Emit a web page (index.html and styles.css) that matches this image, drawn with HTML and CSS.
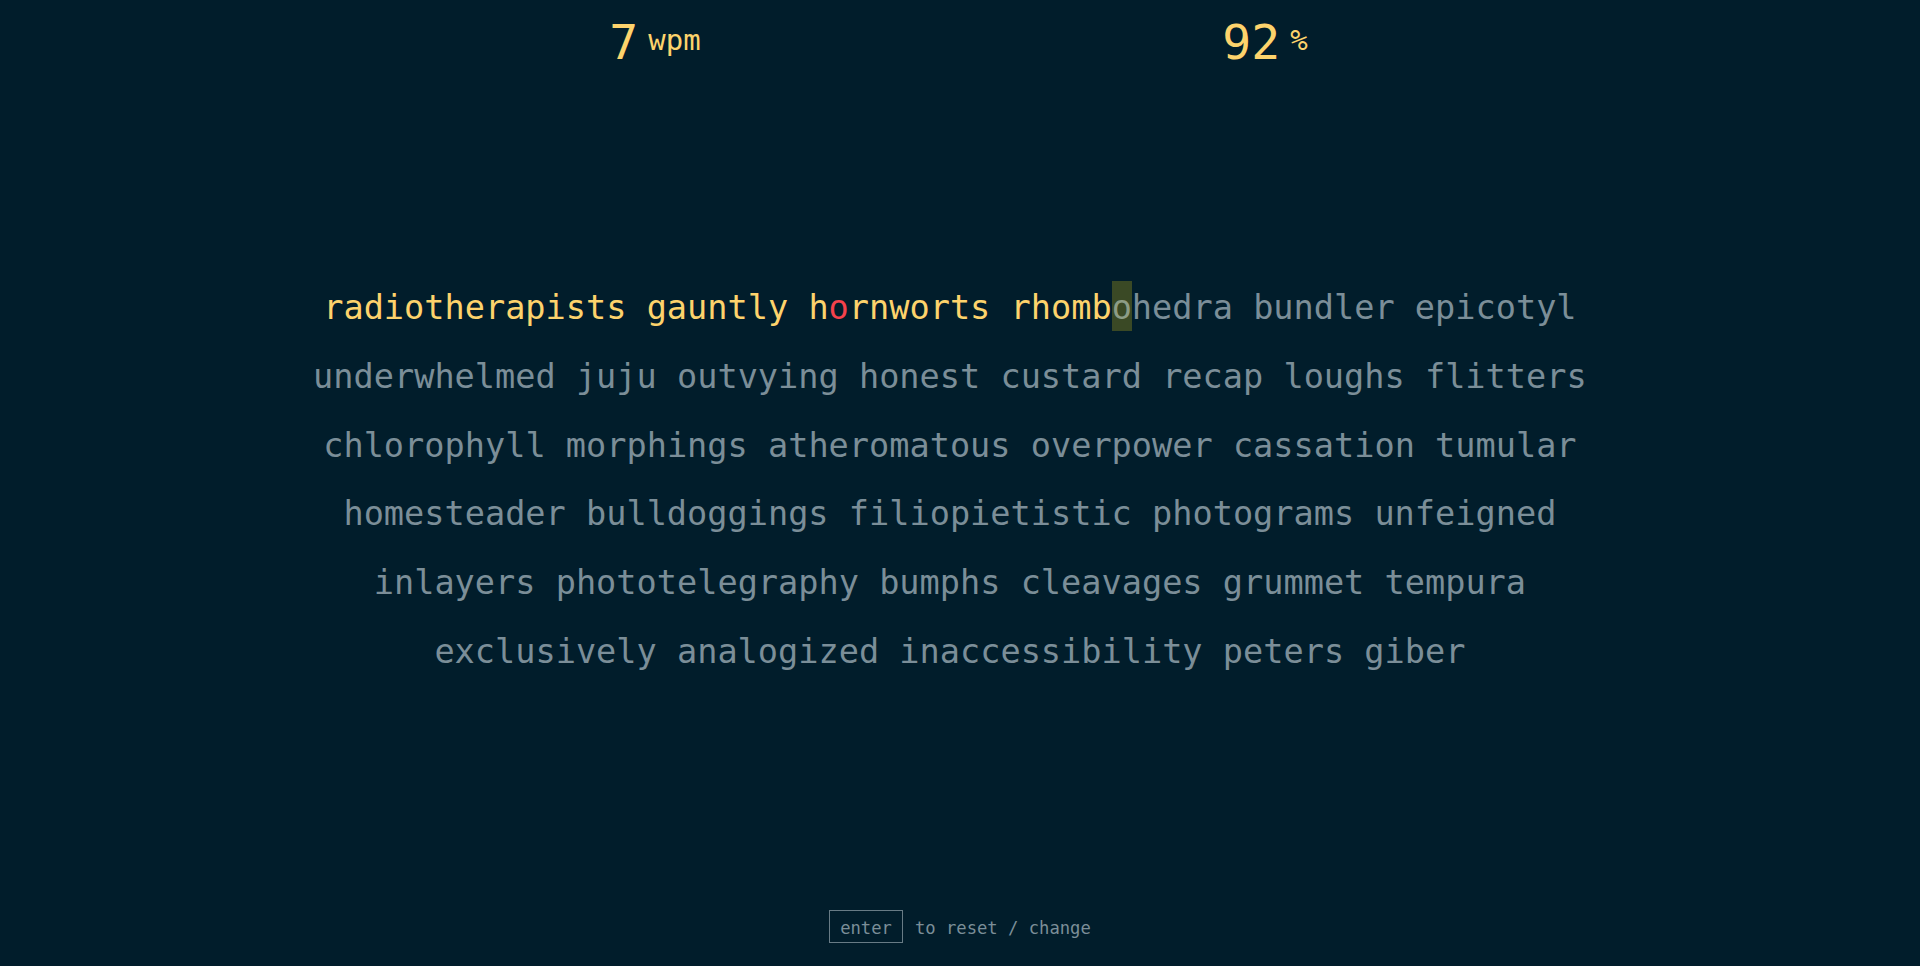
FILE: index.html
```html
<!DOCTYPE html>
<html lang="en">
<head>
<meta charset="utf-8">
<title>typing test</title>
<link rel="stylesheet" href="styles.css">
</head>
<body>
<div class="app">
  <header class="stats">
    <div class="stat"><span class="stat-value">7</span><span class="stat-unit">wpm</span></div>
    <div class="stat"><span class="stat-value">92</span><span class="stat-unit">%</span></div>
  </header>
  <main class="words">
    <span class="word typed">radiotherapists</span><span class="word typed">gauntly</span><span class="word typed">h<span class="wrong">o</span>rnworts</span><span class="word typed">rhomb<span class="cursor">o</span><span class="pending">hedra</span></span><span class="word">bundler</span><span class="word">epicotyl</span><span class="word">underwhelmed</span><span class="word">juju</span><span class="word">outvying</span><span class="word">honest</span><span class="word">custard</span><span class="word">recap</span><span class="word">loughs</span><span class="word">flitters</span><span class="word">chlorophyll</span><span class="word">morphings</span><span class="word">atheromatous</span><span class="word">overpower</span><span class="word">cassation</span><span class="word">tumular</span><span class="word">homesteader</span><span class="word">bulldoggings</span><span class="word">filiopietistic</span><span class="word">photograms</span><span class="word">unfeigned</span><span class="word">inlayers</span><span class="word">phototelegraphy</span><span class="word">bumphs</span><span class="word">cleavages</span><span class="word">grummet</span><span class="word">tempura</span><span class="word">exclusively</span><span class="word">analogized</span><span class="word">inaccessibility</span><span class="word">peters</span><span class="word">giber</span>
  </main>
  <footer class="hint">
    <span class="key">enter</span><span class="hint-text">to reset / change</span>
  </footer>
</div>
</body>
</html>
```

FILE: styles.css
```css
html, body {
  margin: 0;
  padding: 0;
  background: #011d2b;
}

body {
  font-family: "DejaVu Sans Mono", "Liberation Mono", monospace;
  color: #7b8e98;
}

.app {
  height: 966px;
  display: flex;
  flex-direction: column;
}

.stats {
  width: 1220px;
  margin: 0 auto;
  padding-top: 14px;
  display: grid;
  grid-template-columns: 1fr 1fr;
  color: #fdd36c;
}

.stat {
  display: flex;
  justify-content: center;
  align-items: center;
  gap: 10px;
  height: 56px;
}

.stat-value {
  font-size: 48px;
  line-height: 56px;
}

.stat-unit {
  font-size: 29px;
  margin-bottom: 4px;
}

.words {
  width: 1300px;
  margin: 204px auto 0;
  display: flex;
  flex-wrap: wrap;
  justify-content: center;
  font-size: 33.6px;
  line-height: 68.8px;
}

.word {
  margin-right: 1ch;
  white-space: nowrap;
}

.typed {
  color: #fdd36c;
}

.wrong {
  color: #f5424c;
}

.cursor {
  background: #3a4925;
  color: #8c9c86;
  padding: 7px 0 4px;
}

.pending {
  color: #7b8e98;
}

.hint {
  margin-top: auto;
  padding-bottom: 23px;
  display: flex;
  justify-content: center;
  align-items: baseline;
  gap: 12px;
  font-size: 17.2px;
  color: #7b8e98;
}

.key {
  border: 1px solid #687b85;
  padding: 7px 10px 3px;
  line-height: 21px;
}
```
